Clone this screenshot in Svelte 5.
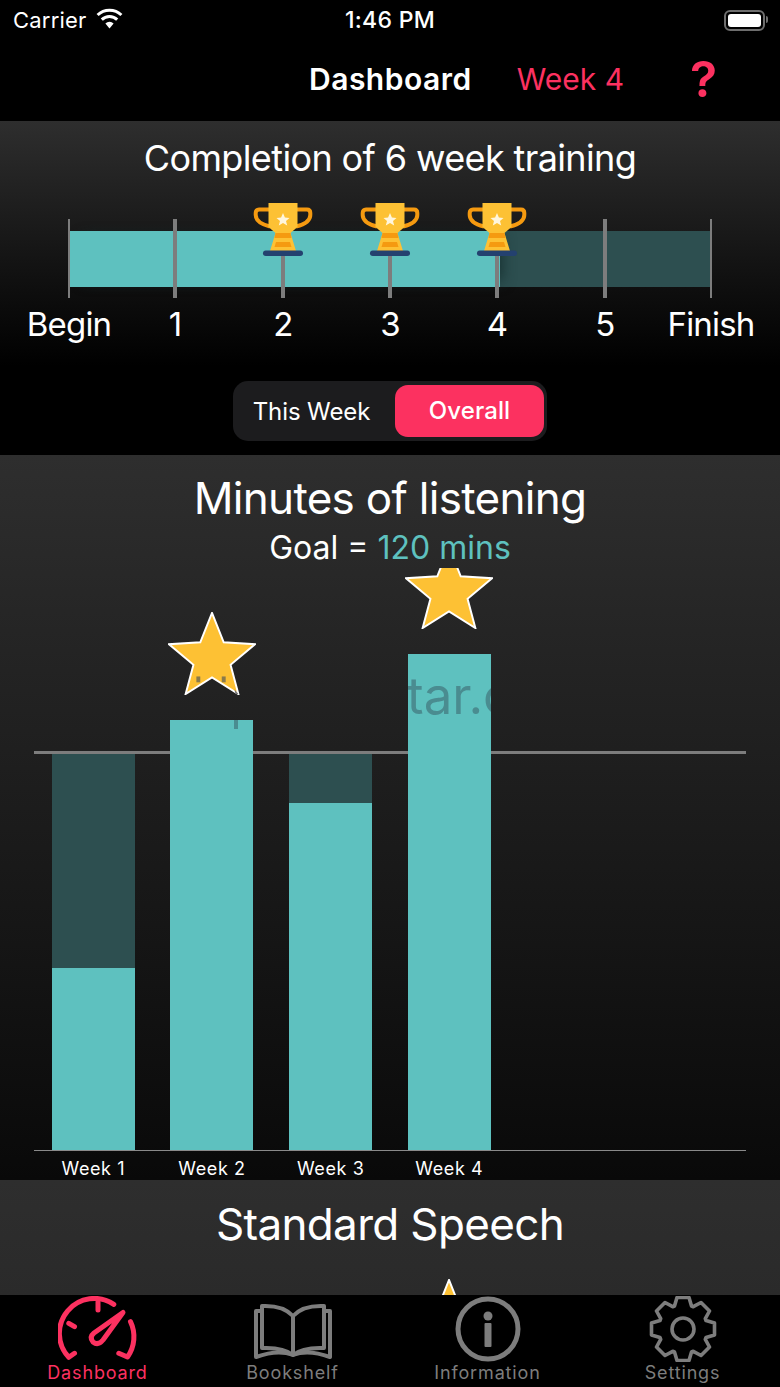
<script>
  const weeks = [
    { label: 'Week 1', fill: 182, track: 396 },
    { label: 'Week 2', fill: 430, track: 396, star: true },
    { label: 'Week 3', fill: 347, track: 396 },
    { label: 'Week 4', fill: 496, track: 396, star: true }
  ];
  const marks = [
    { label: 'Begin', x: 69, thin: true },
    { label: '1', x: 175 },
    { label: '2', x: 283, trophy: true },
    { label: '3', x: 390, trophy: true },
    { label: '4', x: 497, trophy: true },
    { label: '5', x: 605 },
    { label: 'Finish', x: 711, thin: true }
  ];
  const starPoints = '44,0 56,30 88,32 63,53 71,83 44,66 17,83 25,53 0,32 32,30';

  // 8 toothed gear for the settings tab
  function gearPath() {
    const pts = [
      [-8.5, 23], [-6, 31.5], [6, 31.5], [8.5, 23]
    ];
    let d = '';
    for (let k = 0; k < 8; k++) {
      const a = (k * Math.PI) / 4;
      for (const [x, r] of pts) {
        const px = x * Math.cos(a) + r * Math.sin(a);
        const py = x * Math.sin(a) - r * Math.cos(a);
        d += `${d ? 'L' : 'M'}${px.toFixed(1)} ${py.toFixed(1)} `;
      }
    }
    return d + 'Z';
  }
</script>

<div class="screen">
  <div class="status">
    <div class="carrier">
      Carrier
      <svg width="27" height="21" viewBox="0 0 27 21">
        <path d="M13.5 20.5 L9.4 15.4 a6 6 0 0 1 8.2 0Z" fill="#fff" />
        <path d="M5.8 11.6 a11 11 0 0 1 15.4 0" fill="none" stroke="#fff" stroke-width="3" />
        <path d="M1.6 7 a17 17 0 0 1 23.8 0" fill="none" stroke="#fff" stroke-width="3" />
      </svg>
    </div>
    <div class="clock">1:46 PM</div>
    <div class="battery"><span></span></div>
  </div>

  <div class="nav">
    <span class="nav-title">Dashboard</span>
    <span class="nav-week">Week 4</span>
    <span class="nav-help">?</span>
  </div>

  <section class="panel completion">
    <h2>Completion of 6 week training</h2>
    <div class="timeline">
      <div class="track"><div class="track-fill"></div></div>
      {#each marks as m}
        <div class="tick" class:thin={m.thin} style="left: {m.x}px"></div>
        {#if m.trophy}
          <svg class="trophy" style="left: {m.x - 30}px" width="60" height="53" viewBox="0 0 60 53">
            <path d="M16 6.5 H6 Q2.7 6.5 2.7 10 V12 Q2.7 20 17 23.5 M44 6.5 H54 Q57.3 6.5 57.3 10 V12 Q57.3 20 43 23.5" fill="none" stroke="#f59a10" stroke-width="4" />
            <path d="M15.5 0 H44.5 V24 L37.5 30 L43 48 H17 L22.5 30 L15.5 24Z" fill="#fdc134" />
            <path d="M22.5 30 H37.5 L38.5 35 H21.5Z" fill="#f59a10" />
            <path d="M23 39 H37 L38.5 44 H21.5Z" fill="#f59a10" />
            <polygon points="30,10 31.9,14.6 36.5,14.9 33,18 34.2,22.6 30,20 25.8,22.6 27,18 23.5,14.9 28.1,14.6" fill="#fff6dd" />
            <rect x="10" y="47.5" width="40" height="5.5" rx="2.7" fill="#24416f" />
          </svg>
        {/if}
        <span class="mark-label" style="left: {m.x}px">{m.label}</span>
      {/each}
    </div>
  </section>

  <div class="toggle-row">
    <div class="toggle">
      <span class="seg">This Week</span>
      <span class="seg active">Overall</span>
    </div>
  </div>

  <section class="panel listening">
    <h2>Minutes of listening</h2>
    <p class="goal">Goal = <span>120 mins</span></p>
    <div class="chart">
      <div class="goal-line"></div>
      <div class="bars">
        {#each weeks as w, i}
          <div class="col">
            <div class="bar-area">
              <div class="bar-track" style="height: {w.track}px"></div>
              <div class="bar-fill" style="height: {w.fill}px">
                {#if i === 3}<span class="alt-text">tar.c</span>{/if}
                {#if i === 1}<span class="alt-mark"></span>{/if}
              </div>
              {#if w.star}
                <svg class="star" style="bottom: {w.fill + 25}px" width="88" height="83" viewBox="-1 -1 90 85">
                  <polygon points={starPoints} fill="#fdc134" stroke="#fff" stroke-width="2" />
                  {#if i === 1}
                    <rect x="28" y="65" width="4" height="6" fill="#8a7a4a" />
                    <rect x="54" y="65" width="4" height="6" fill="#8a7a4a" />
                    <polygon points="67,78 71,83 68,83" fill="#777" />
                  {/if}
                </svg>
              {/if}
            </div>
            <span class="week-label">{w.label}</span>
          </div>
        {/each}
      </div>
    </div>
  </section>

  <section class="panel speech">
    <h2>Standard Speech</h2>
    <svg class="star peek" width="88" height="83" viewBox="-1 -1 90 85">
      <polygon points={starPoints} fill="#fdc134" stroke="#fff" stroke-width="2" />
    </svg>
  </section>

  <nav class="tabs">
    <div class="tab active">
      <svg width="80" height="66" viewBox="0 0 80 66" fill="none" stroke="#fc3160" stroke-width="5" stroke-linecap="round" stroke-linejoin="round">
        <path d="M16.5 57.3 L10.8 61.3 A35 35 0 0 1 55.8 8.3" />
        <path d="M72.5 25.7 A35 35 0 0 1 69.5 61 L60.8 57.3" />
        <path d="M40 6 V14 M10.8 27.3 L16.5 30.7" />
        <path d="M65 16.5 L45 44 Q40 50 35 46 Q31 41 36 37Z" />
      </svg>
      <span>Dashboard</span>
    </div>
    <div class="tab">
      <svg width="80" height="60" viewBox="0 0 80 60" fill="none" stroke="#7d7d7d" stroke-width="4" stroke-linejoin="round">
        <path d="M40 14 Q30 3 9 4 V46 Q30 45 40 53 Q50 45 71 46 V4 Q50 3 40 14Z M40 14 V53" />
        <path d="M9 9 H3 V55 Q25 47 40 53 Q55 47 77 55 V9 H71" />
      </svg>
      <span>Bookshelf</span>
    </div>
    <div class="tab">
      <svg width="66" height="66" viewBox="0 0 66 66">
        <circle cx="33" cy="33" r="30" fill="none" stroke="#7d7d7d" stroke-width="5" />
        <circle cx="33" cy="20" r="4.5" fill="#7d7d7d" />
        <rect x="29.5" y="27" width="7" height="24" rx="1" fill="#7d7d7d" />
      </svg>
      <span>Information</span>
    </div>
    <div class="tab">
      <svg width="68" height="66" viewBox="-34 -33 68 66" fill="none" stroke="#7d7d7d" stroke-width="3.6" stroke-linejoin="round">
        <circle r="11" />
        <path d={gearPath()} />
      </svg>
      <span>Settings</span>
    </div>
  </nav>
</div>

<style>
  :global(body) {
    margin: 0;
    background: #000;
  }

  .screen {
    width: 780px;
    height: 1387px;
    background: #000;
    color: #fff;
    font-family: Inter, "Liberation Sans", sans-serif;
    overflow: hidden;
    display: flex;
    flex-direction: column;
  }

  /* status bar */
  .status {
    height: 40px;
    display: flex;
    align-items: center;
    justify-content: space-between;
    padding: 0 13px;
    font-size: 22px;
    position: relative;
  }

  .carrier {
    display: flex;
    align-items: center;
    gap: 9px;
    letter-spacing: 0.2px;
  }

  .carrier svg {
    margin-top: -3px;
  }

  .clock {
    position: absolute;
    left: 0;
    right: 0;
    text-align: center;
    font-size: 23px;
    font-weight: 500;
    letter-spacing: 0.3px;
  }

  .battery {
    position: relative;
    width: 41px;
    height: 21px;
    margin-right: 2px;
    border: 2px solid #6e6e6e;
    border-radius: 6px;
    padding: 2px;
    box-sizing: border-box;
  }

  .battery::after {
    content: '';
    position: absolute;
    right: -5px;
    top: 4px;
    width: 2px;
    height: 7px;
    background: #6e6e6e;
    border-radius: 0 2px 2px 0;
  }

  .battery span {
    display: block;
    height: 100%;
    background: #fff;
    border-radius: 3px;
  }

  /* nav */
  .nav {
    height: 81px;
    display: flex;
    align-items: center;
    padding-bottom: 3px;
    box-sizing: border-box;
  }

  .nav-title {
    margin-left: 309px;
    font-size: 30px;
    font-weight: 600;
    letter-spacing: 0.5px;
  }

  .nav-week {
    margin-left: 45px;
    font-size: 30px;
    color: #fc3160;
    letter-spacing: 0;
  }

  .nav-help {
    margin-left: 66px;
    font-size: 50px;
    font-weight: 600;
    color: #fc3160;
  }

  /* panels */
  .panel {
    background: linear-gradient(#2e2e2e, #000);
  }

  .panel h2 {
    margin: 0;
    font-weight: 400;
    text-align: center;
  }

  .completion {
    height: 245px;
  }

  .completion h2 {
    font-size: 36px;
    letter-spacing: -0.62px;
    padding-top: 15px;
    line-height: 44px;
  }

  .timeline {
    position: relative;
    height: 170px;
    margin-top: 14px;
  }

  .track {
    position: absolute;
    left: 69px;
    top: 37px;
    width: 642px;
    height: 56px;
    background: #2d4f50;
  }

  .track-fill {
    width: 431px;
    height: 100%;
    background: #5ec1bf;
    box-shadow: 8px 0 14px -6px rgba(20, 45, 46, 0.9);
  }

  .tick {
    position: absolute;
    top: 25px;
    width: 4px;
    height: 79px;
    margin-left: -2px;
    background: #7d7d7d;
  }

  .tick.thin {
    width: 2px;
    margin-left: -1px;
  }

  .trophy {
    position: absolute;
    top: 9px;
  }

  .mark-label {
    position: absolute;
    top: 110px;
    transform: translateX(-50%);
    font-size: 33px;
    letter-spacing: -0.8px;
    line-height: 40px;
  }

  /* toggle */
  .toggle-row {
    height: 89px;
    display: flex;
    justify-content: center;
    padding-top: 15px;
    box-sizing: border-box;
  }

  .toggle {
    width: 314px;
    height: 60px;
    border-radius: 15px;
    background: #1c1c1e;
    display: flex;
    align-items: center;
    padding-right: 3px;
    box-sizing: border-box;
  }

  .seg {
    flex: 1;
    text-align: center;
    font-size: 24px;
    letter-spacing: -0.1px;
    padding-right: 5px;
  }

  .seg.active {
    flex: 0 0 149px;
    height: 52px;
    line-height: 52px;
    border-radius: 13px;
    background: #fc3160;
    font-weight: 500;
    letter-spacing: 0.1px;
    padding-right: 0;
  }

  /* chart */
  .listening {
    height: 725px;
    background: linear-gradient(#2e2e2e, #090909);
    display: flex;
    flex-direction: column;
  }

  .listening h2 {
    font-size: 44px;
    letter-spacing: -0.7px;
    padding-top: 16px;
    line-height: 54px;
  }

  .goal {
    margin: 0;
    padding-top: 3px;
    text-align: center;
    font-size: 32px;
    letter-spacing: 0;
    line-height: 40px;
  }

  .goal span {
    color: #5ec1bf;
  }

  .chart {
    position: relative;
    height: 612px;
    overflow: hidden;
  }

  .goal-line {
    position: absolute;
    left: 34px;
    right: 34px;
    top: 183px;
    height: 3px;
    background: #7d7d7d;
  }

  .bars {
    position: relative;
    height: 100%;
    margin: 0 34px;
    display: flex;
    box-sizing: border-box;
  }

  .col {
    flex: 0 0 118.67px;
    display: flex;
    flex-direction: column;
    align-items: center;
  }

  .bar-area {
    position: relative;
    flex: 0 0 582px;
    width: 83px;
  }

  .bar-track,
  .bar-fill {
    position: absolute;
    left: 0;
    bottom: 0;
    width: 100%;
  }

  .bar-track {
    background: #2d4f50;
  }

  .bar-fill {
    background: #5ec1bf;
    overflow: hidden;
  }

  .bars::after {
    content: '';
    position: absolute;
    left: 0;
    right: 0;
    top: 582px;
    height: 1px;
    background: #8a8a8a;
  }

  .alt-text {
    position: absolute;
    left: -1px;
    top: 16px;
    font-size: 51px;
    line-height: 52px;
    color: #4a8c90;
    white-space: nowrap;
  }

  .alt-mark {
    position: absolute;
    left: 64px;
    top: 0;
    width: 4px;
    height: 9px;
    background: #4a8c90;
  }

  .star {
    position: absolute;
    left: -2.5px;
  }

  .week-label {
    margin-top: 8px;
    font-size: 18px;
    letter-spacing: 0.6px;
    line-height: 22px;
  }

  .speech {
    position: relative;
    height: 115px;
    background: linear-gradient(#2e2e2e, #2a2a2a);
    overflow: hidden;
  }

  .speech h2 {
    font-size: 44px;
    letter-spacing: -0.65px;
    padding-top: 17px;
    line-height: 54px;
  }

  .peek {
    left: 405px;
    top: 99px;
  }

  /* tab bar */
  .tabs {
    flex: 1;
    display: grid;
    grid-template-columns: repeat(4, 1fr);
    background: #000;
  }

  .tab {
    display: flex;
    flex-direction: column;
    align-items: center;
    justify-content: flex-end;
    padding-bottom: 3px;
    font-size: 18px;
    letter-spacing: 0.85px;
    color: #7d7d7d;
  }

  .tab.active {
    color: #fc3160;
  }

  .tab span {
    line-height: 22px;
  }
</style>
